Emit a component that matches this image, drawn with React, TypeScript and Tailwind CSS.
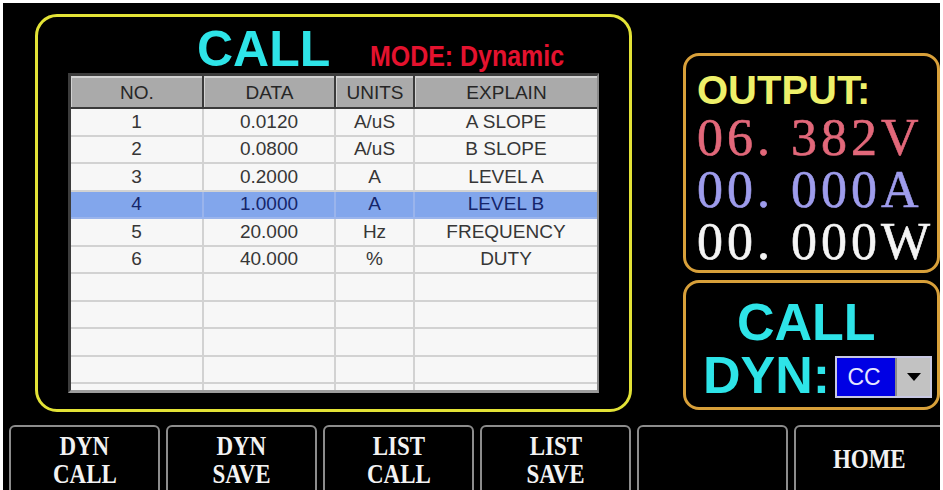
import React from "react";

const rows: [string, string, string, string][] = [
  ["1", "0.0120", "A/uS", "A SLOPE"],
  ["2", "0.0800", "A/uS", "B SLOPE"],
  ["3", "0.2000", "A", "LEVEL A"],
  ["4", "1.0000", "A", "LEVEL B"],
  ["5", "20.000", "Hz", "FREQUENCY"],
  ["6", "40.000", "%", "DUTY"],
  ["", "", "", ""],
  ["", "", "", ""],
  ["", "", "", ""],
  ["", "", "", ""],
  ["", "", "", ""],
];

const sans = { fontFamily: '"Liberation Sans", Arial, sans-serif' };
const serif = { fontFamily: '"Liberation Serif", "Times New Roman", serif' };

function Table() {
  return (
    <div
      className="ml-[30px] mt-[3px] w-[531px] h-[320px] overflow-hidden bg-[#f7f7f7] border-t-[3px] border-l-[3px] border-r-[2px] border-b-[3px] border-t-[#3c3c3c] border-l-[#3c3c3c] border-r-[#8a8a8a] border-b-[#9c9c9c] text-[19px] text-[#363636]"
      style={sans}
    >
      <div className="flex h-[33px] gap-[2px] bg-[#3a3a3a] border-b-[2px] border-[#3a3a3a]">
        {[
          ["NO.", "w-[131px]"],
          ["DATA", "w-[130px]"],
          ["UNITS", "w-[77px]"],
          ["EXPLAIN", "flex-1"],
        ].map(([t, w]) => (
          <div
            key={t}
            className={`${w} flex items-center justify-center bg-[#aaaaaa] border-t-[2px] border-l-[1px] border-[#d2d2d2] leading-none text-[#262626]`}
          >
            {t}
          </div>
        ))}
      </div>
      {rows.map((r, i) => {
        const hl = i === 3;
        const line = hl ? "border-[#9ab4ec]" : "border-[#d2d2d2]";
        return (
          <div
            key={i}
            className={`flex h-[27.5px] shrink-0 border-b-[2px] ${
              hl ? "bg-[#82a6ec] text-[#15256a] border-[#9ab4ec]" : "border-[#d2d2d2]"
            }`}
          >
            <div className={`w-[133px] flex items-center justify-center border-r-[2px] ${line}`}>{r[0]}</div>
            <div className={`w-[132px] flex items-center justify-center border-r-[2px] ${line}`}>{r[1]}</div>
            <div className={`w-[79px] flex items-center justify-center border-r-[2px] ${line}`}>{r[2]}</div>
            <div className="flex-1 flex items-center justify-center">{r[3]}</div>
          </div>
        );
      })}
    </div>
  );
}

function Btn({ l1, l2, home }: { l1?: string; l2?: string; home?: string }) {
  return (
    <div
      className="h-[70px] border-[2px] border-[#8c8c8c] rounded-t-[6px] flex flex-col items-center text-[#f2f2f2] font-bold text-[28px] leading-[28px]"
      style={serif}
    >
      {home ? (
        <span className="inline-block scale-x-[0.82] pt-[18px]">{home}</span>
      ) : l1 ? (
        <div className="pt-[5px] flex flex-col items-center">
          <span className="inline-block scale-x-[0.82]">{l1}</span>
          <span className="inline-block scale-x-[0.82]">{l2}</span>
        </div>
      ) : null}
    </div>
  );
}

export default function App() {
  return (
    <div className="w-[943px] h-[490px] bg-white overflow-hidden pt-[3px] px-[3px]">
      <div className="bg-black h-[487px] overflow-hidden">
        <div className="flex pt-[11px] pl-[32px]">
          {/* main panel */}
          <div className="w-[597px] h-[398px] border-[3px] border-[#e2e236] rounded-[22px] shrink-0">
            <div className="flex items-baseline pl-[159px] pt-[7px] h-[53px]">
              <span className="text-[50px] leading-[50px] font-bold text-[#2ee4e8]" style={sans}>
                CALL
              </span>
              <span
                className="ml-[40px] inline-block scale-x-[0.86] origin-left text-[29px] leading-[29px] font-bold text-[#e4122e]"
                style={sans}
              >
                MODE: Dynamic
              </span>
            </div>
            <Table />
          </div>
          {/* right column */}
          <div className="ml-[51px] mt-[39px] w-[257px] flex flex-col gap-[7px]">
            <div className="h-[220px] border-[3px] border-[#d8a03a] rounded-[16px] pl-[11px] pt-[14px] overflow-hidden">
              <div className="text-[40px] leading-[40px] font-bold text-[#eef06a]" style={sans}>
                OUTPUT:
              </div>
              <div
                className="mt-[2px] text-[52px] leading-[52px] tracking-[4px] whitespace-pre [-webkit-text-stroke:0.6px_currentColor]"
                style={serif}
              >
                <div className="text-[#e2687a]">06. 382V</div>
                <div className="text-[#9e9cec]">00. 000A</div>
                <div className="text-[#f4f4f4]">00. 000W</div>
              </div>
            </div>
            <div className="h-[130px] border-[3px] border-[#d8a03a] rounded-[16px] pt-[13px]">
              <div className="text-[52px] leading-[52px] font-bold text-[#2ee4e8] pl-[51px]" style={sans}>
                CALL
              </div>
              <div className="mt-[1px] flex items-start pl-[17px]">
                <span className="text-[52px] leading-[52px] font-bold text-[#2ee4e8]" style={sans}>
                  DYN:
                </span>
                <div className="ml-[5px] mt-[7px] w-[97px] h-[42px] border-[2px] border-[#c8c8e2] bg-[#c8c8e2] flex">
                  <div className="w-[58px] h-full bg-[#0000e4] flex items-center justify-center pr-[4px] text-[23px] text-[#e6e6ff]" style={sans}>
                    CC
                  </div>
                  <div className="flex-1 h-full bg-[#c2c2c2] border-l-[2px] border-[#8a8a8a] flex items-center justify-center">
                    <svg width="16" height="10" viewBox="0 0 16 10">
                      <polygon points="1,1 15,1 8,9" fill="#000" />
                    </svg>
                  </div>
                </div>
              </div>
            </div>
          </div>
        </div>
        {/* buttons */}
        <div className="grid grid-cols-[151px_151px_151px_151px_151px_151px] gap-[6px] pl-[6px] mt-[13px]">
          <Btn l1="DYN" l2="CALL" />
          <Btn l1="DYN" l2="SAVE" />
          <Btn l1="LIST" l2="CALL" />
          <Btn l1="LIST" l2="SAVE" />
          <Btn />
          <Btn home="HOME" />
        </div>
      </div>
    </div>
  );
}
